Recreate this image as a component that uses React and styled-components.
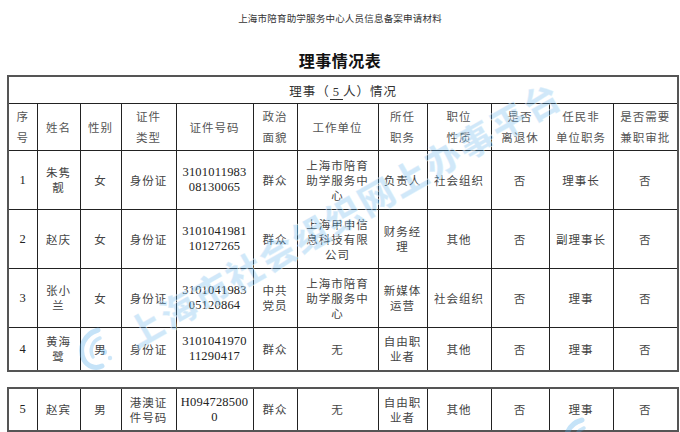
import React from 'react';
import styled, {createGlobalStyle} from 'styled-components';

const GlobalStyle = createGlobalStyle`
  html, body {
    margin: 0;
    padding: 0;
    background: #fff;
  }
  body {
    font-family: "Noto Sans CJK SC", "Liberation Serif", serif;
  }
`

const Page = styled.div`
  position: relative;
  width: 680px;
  height: 432px;
  overflow: hidden;
  background: #fff;
`

const DocHeader = styled.div`
  padding-top: 12px;
  font-size: 9.5px;
  line-height: 12px;
  color: #333;
  text-align: center;
  letter-spacing: 0.2px;
`

const Title = styled.h1`
  margin: 26px 0 5px;
  font-size: 16px;
  line-height: 20px;
  font-weight: 700;
  color: #111;
  text-align: center;
  letter-spacing: 0.5px;
`

const TableWrap = styled.div`
  padding-left: 7px;
`

const Sheet = styled.table`
  width: 670px;
  table-layout: fixed;
  border-collapse: collapse;
  border: 2px solid #555;
  margin-top: ${p => p.$gap || 0}px;
`

const Caption = styled.td`
  height: 24px;
  border: 1px solid #222;
  text-align: center;
  font-size: 12.5px;
  color: #333;
  letter-spacing: 1px;
`

const Five = styled.span`
  display: inline-block;
  padding: 0 3px;
  border-bottom: 1px solid #333;
  line-height: 13px;
  font-family: "Liberation Serif", serif;
`

const HeadCell = styled.td`
  height: 46px;
  border: 1px solid #222;
  padding: 0 2px;
  text-align: center;
  vertical-align: middle;
  font-size: 11.5px;
  line-height: 21px;
  letter-spacing: 1px;
  color: #555;
  white-space: nowrap;
`

const Cell = styled.td`
  height: ${p => p.$h}px;
  border: 1px solid #222;
  padding: 0 2px;
  text-align: center;
  vertical-align: middle;
  font-size: ${p => (p.$num ? '12.5px' : '11.5px')};
  font-family: ${p => (p.$num ? '"Liberation Serif", serif' : '"Noto Sans CJK SC", serif')};
  letter-spacing: ${p => (p.$num ? '0.2px' : '1px')};
  line-height: 15px;
  color: ${p => (p.$num ? '#222' : '#444')};
  white-space: nowrap;
`

const Watermark = styled.div`
  position: absolute;
  left: 343px;
  top: 213px;
  transform: translate(-50%, -50%) rotate(-29.7deg);
  font-size: 36px;
  font-weight: 900;
  letter-spacing: 2px;
  white-space: nowrap;
  color: rgba(90, 175, 235, 0.3);
  -webkit-text-stroke: 1px rgba(255, 255, 255, 0.5);
  pointer-events: none;
`

const Logo = styled.svg`
  position: absolute;
  left: ${p => p.$x}px;
  top: ${p => p.$y}px;
  pointer-events: none;
`

const widths = [29, 43, 41, 55, 77, 44, 81, 49, 64, 58, 64, 65]

const heads = [
  ['序', '号'], ['姓名'], ['性别'], ['证件', '类型'], ['证件号码'], ['政治', '面貌'],
  ['工作单位'], ['所任', '职务'], ['职位', '性质'], ['是否', '离退休'], ['任民非', '单位职务'], ['是否需要', '兼职审批'],
]

const numCols = [0, 4]

const rows = [
  {h: 58, cells: [['1'], ['朱隽', '靓'], ['女'], ['身份证'], ['3101011983', '08130065'], ['群众'], ['上海市陪育', '助学服务中', '心'], ['负责人'], ['社会组织'], ['否'], ['理事长'], ['否']]},
  {h: 58, cells: [['2'], ['赵庆'], ['女'], ['身份证'], ['3101041981', '10127265'], ['群众'], ['上海甲申信', '息科技有限', '公司'], ['财务经', '理'], ['其他'], ['否'], ['副理事长'], ['否']]},
  {h: 58, cells: [['3'], ['张小', '兰'], ['女'], ['身份证'], ['3101041983', '05120864'], ['中共', '党员'], ['上海市陪育', '助学服务中', '心'], ['新媒体', '运营'], ['社会组织'], ['否'], ['理事'], ['否']]},
  {h: 42, cells: [['4'], ['黄海', '鹭'], ['男'], ['身份证'], ['3101041970', '11290417'], ['群众'], ['无'], ['自由职', '业者'], ['其他'], ['否'], ['理事'], ['否']]},
]

const lastRow = {h: 41, cells: [['5'], ['赵宾'], ['男'], ['港澳证', '件号码'], ['H094728500', '0'], ['群众'], ['无'], ['自由职', '业者'], ['其他'], ['否'], ['理事'], ['否']]}

function Lines({lines}) {
  return lines.map((l, i) => (
    <React.Fragment key={i}>
      {i > 0 && <br/>}
      {l}
    </React.Fragment>
  ))
}

function Cols() {
  return (
    <colgroup>
      {widths.map((w, i) => <col key={i} style={{width: w}}/>)}
    </colgroup>
  )
}

function Row({row}) {
  return (
    <tr>
      {row.cells.map((c, i) => (
        <Cell key={i} $h={row.h} $num={numCols.includes(i)}>
          <Lines lines={c}/>
        </Cell>
      ))}
    </tr>
  )
}

function LogoMark({x, y, size}) {
  return (
    <Logo $x={x} $y={y} width={size} height={size * 1.1} viewBox="0 0 40 44">
      <path d="M22 4 C8 8 2 22 8 34 C12 41 20 43 26 40" fill="none"
            stroke="rgba(90,175,235,0.35)" strokeWidth="5" strokeLinecap="round"/>
      <path d="M24 12 C16 15 13 24 17 31" fill="none"
            stroke="rgba(90,175,235,0.3)" strokeWidth="3.5" strokeLinecap="round"/>
      <circle cx="28" cy="26" r="3" fill="rgba(90,175,235,0.35)"/>
      <circle cx="34" cy="32" r="2.2" fill="rgba(90,175,235,0.3)"/>
    </Logo>
  )
}

export default function App() {
  return (
    <Page>
      <GlobalStyle/>
      <DocHeader>上海市陪育助学服务中心人员信息备案申请材料</DocHeader>
      <Title>理事情况表</Title>
      <TableWrap>
        <Sheet>
          <Cols/>
          <tbody>
            <tr>
              <Caption colSpan={12}>理事（<Five>5</Five>人）情况</Caption>
            </tr>
            <tr>
              {heads.map((h, i) => (
                <HeadCell key={i}><Lines lines={h}/></HeadCell>
              ))}
            </tr>
            {rows.map((r, i) => <Row key={i} row={r}/>)}
          </tbody>
        </Sheet>
        <Sheet $gap={15}>
          <Cols/>
          <tbody>
            <Row row={lastRow}/>
          </tbody>
        </Sheet>
      </TableWrap>
      <LogoMark x={76} y={326} size={40}/>
      <Watermark>上海市社会组织网上办事平台</Watermark>
      <LogoMark x={560} y={416} size={40}/>
    </Page>
  )
}
